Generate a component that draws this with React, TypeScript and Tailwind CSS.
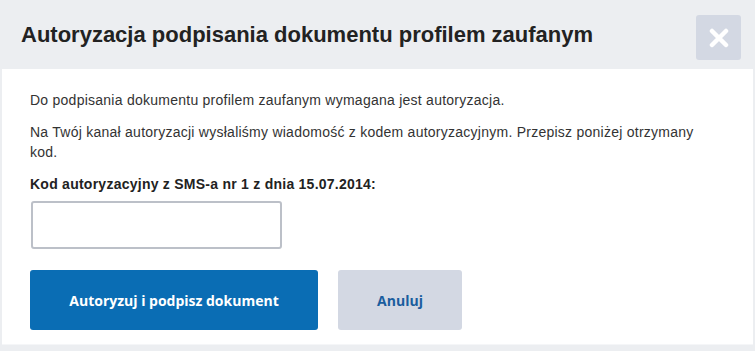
import React, { useState } from 'react';

export default function App() {
  const [code, setCode] = useState('');

  return (
    <div className="w-[755px] h-[351px] bg-[#eceef1] flex flex-col font-['Liberation_Sans',Arial,sans-serif] text-[#333]">
      {/* header */}
      <div className="h-[69px] flex items-center justify-between pl-[21px] pr-[14px] shrink-0">
        <h1 className="text-[22px] font-bold text-[#222]">
          Autoryzacja podpisania dokumentu profilem zaufanym
        </h1>
        <button className="w-[45px] h-[45px] mt-[6px] bg-[#d3d8e3] rounded-[3px] flex items-center justify-center">
          <svg width="20" height="20" viewBox="0 0 20 20">
            <path d="M3 3 L17 17 M17 3 L3 17" stroke="#fff" strokeWidth="4.5" strokeLinecap="round" />
          </svg>
        </button>
      </div>

      {/* body */}
      <div className="mx-[2px] bg-white h-[276px] border-b border-[#f5f6f8] pl-[28px] pr-[30px] pt-[21px] tracking-[0.25px]">
        <p className="text-[14px] leading-[20px]">
          Do podpisania dokumentu profilem zaufanym wymagana jest autoryzacja.
        </p>
        <p className="text-[14px] leading-[20px] mt-[12px]">
          Na Twój kanał autoryzacji wysłaliśmy wiadomość z kodem autoryzacyjnym. Przepisz poniżej otrzymany kod.
        </p>
        <label className="block text-[14px] leading-[20px] font-bold text-[#222] mt-[12px]">
          Kod autoryzacyjny z SMS-a nr 1 z dnia 15.07.2014:
        </label>
        <input
          value={code}
          onChange={(e) => setCode(e.target.value)}
          className="block mt-[7px] ml-[1px] w-[251px] h-[48px] border-2 border-[#bcc0c8] rounded-[3px] outline-none px-3 text-[14px]"
        />
        <div className="flex gap-[20px] mt-[21px] font-['Open_Sans',Arial,sans-serif] tracking-normal">
          <button className="w-[288px] h-[60px] bg-[#0a6db4] text-white text-[14px] font-bold rounded-[3px]">
            Autoryzuj i podpisz dokument
          </button>
          <button className="w-[124px] h-[60px] bg-[#d3d8e3] text-[#1a5d9e] text-[14px] font-bold rounded-[3px]">
            Anuluj
          </button>
        </div>
      </div>
    </div>
  );
}
